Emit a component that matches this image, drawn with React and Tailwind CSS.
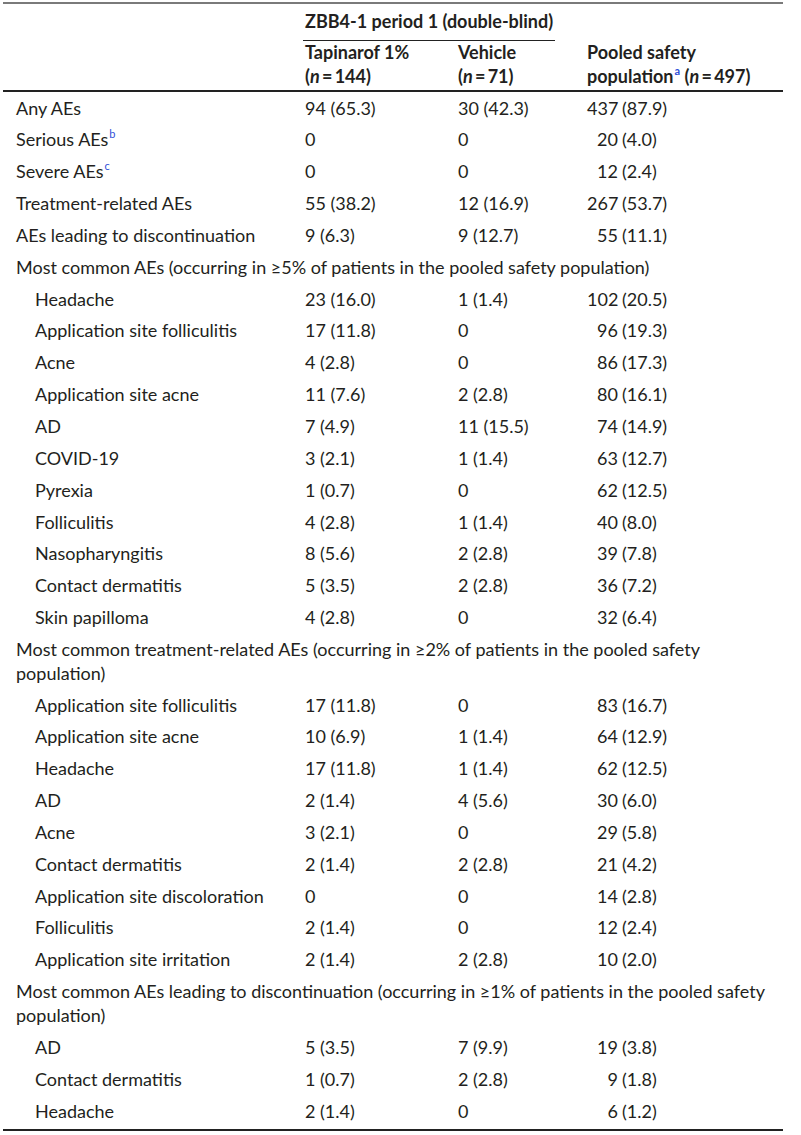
import React from "react";

// rows of the safety table
const rows = [
  { l: "Any AEs", v: ["94 (65.3)", "30 (42.3)", "437 (87.9)"] },
  { l: "Serious AEs", sup: "b", v: ["0", "0", "20 (4.0)"] },
  { l: "Severe AEs", sup: "c", v: ["0", "0", "12 (2.4)"] },
  { l: "Treatment-related AEs", v: ["55 (38.2)", "12 (16.9)", "267 (53.7)"] },
  { l: "AEs leading to discontinuation", v: ["9 (6.3)", "9 (12.7)", "55 (11.1)"] },
  { h: "Most common AEs (occurring in ≥5% of patients in the pooled safety population)" },
  { l: "Headache", i: true, v: ["23 (16.0)", "1 (1.4)", "102 (20.5)"] },
  { l: "Application site folliculitis", i: true, v: ["17 (11.8)", "0", "96 (19.3)"] },
  { l: "Acne", i: true, v: ["4 (2.8)", "0", "86 (17.3)"] },
  { l: "Application site acne", i: true, v: ["11 (7.6)", "2 (2.8)", "80 (16.1)"] },
  { l: "AD", i: true, v: ["7 (4.9)", "11 (15.5)", "74 (14.9)"] },
  { l: "COVID-19", i: true, v: ["3 (2.1)", "1 (1.4)", "63 (12.7)"] },
  { l: "Pyrexia", i: true, v: ["1 (0.7)", "0", "62 (12.5)"] },
  { l: "Folliculitis", i: true, v: ["4 (2.8)", "1 (1.4)", "40 (8.0)"] },
  { l: "Nasopharyngitis", i: true, v: ["8 (5.6)", "2 (2.8)", "39 (7.8)"] },
  { l: "Contact dermatitis", i: true, v: ["5 (3.5)", "2 (2.8)", "36 (7.2)"] },
  { l: "Skin papilloma", i: true, v: ["4 (2.8)", "0", "32 (6.4)"] },
  { h: "Most common treatment-related AEs (occurring in ≥2% of patients in the pooled safety population)" },
  { l: "Application site folliculitis", i: true, v: ["17 (11.8)", "0", "83 (16.7)"] },
  { l: "Application site acne", i: true, v: ["10 (6.9)", "1 (1.4)", "64 (12.9)"] },
  { l: "Headache", i: true, v: ["17 (11.8)", "1 (1.4)", "62 (12.5)"] },
  { l: "AD", i: true, v: ["2 (1.4)", "4 (5.6)", "30 (6.0)"] },
  { l: "Acne", i: true, v: ["3 (2.1)", "0", "29 (5.8)"] },
  { l: "Contact dermatitis", i: true, v: ["2 (1.4)", "2 (2.8)", "21 (4.2)"] },
  { l: "Application site discoloration", i: true, v: ["0", "0", "14 (2.8)"] },
  { l: "Folliculitis", i: true, v: ["2 (1.4)", "0", "12 (2.4)"] },
  { l: "Application site irritation", i: true, v: ["2 (1.4)", "2 (2.8)", "10 (2.0)"] },
  { h: "Most common AEs leading to discontinuation (occurring in ≥1% of patients in the pooled safety population)" },
  { l: "AD", i: true, v: ["5 (3.5)", "7 (9.9)", "19 (3.8)"] },
  { l: "Contact dermatitis", i: true, v: ["1 (0.7)", "2 (2.8)", "9 (1.8)"] },
  { l: "Headache", i: true, v: ["2 (1.4)", "0", "6 (1.2)"] },
];

const Sup = ({ c }) => (
  <sup className="text-[11px] text-[#2f4fd8] -top-[8px] ml-[1px]">{c}</sup>
);

// pooled column: numbers lined up on the bracket
const Pooled = ({ v }) => {
  const k = v.indexOf(" ");
  const a = k < 0 ? v : v.slice(0, k);
  const b = k < 0 ? "" : v.slice(k + 1);
  return (
    <span className="inline-flex whitespace-nowrap">
      <span className="w-[31px] text-right">{a}</span>
      <span className="ml-[4px]">{b}</span>
    </span>
  );
};

const N = ({ n }) => (
  <>
    (<i>n</i>{"\u2009=\u2009"}{n})
  </>
);

export default function App() {
  return (
    <div className="bg-white w-[801px] min-h-[1135px] pl-[3px] pt-[2px] text-[18px] text-[#231f20] font-['Lato','Liberation_Sans',sans-serif]">
      <div className="w-[780px] border-t-2 border-[#7a7a7a] border-b-2 border-b-[#222]">
        {/* header */}
        <div className="grid grid-cols-[302px_153px_129px_196px] leading-[23.85px] font-bold border-b-[2.5px] border-[#222]">
          <div className="row-span-2"></div>
          <div className="col-span-2 pt-[6px] pb-[6px] -ml-[2px] pl-[2px] mr-[32px] border-b border-[#222]">
            ZBB4-1 period 1 (double-blind)
          </div>
          <div></div>
          <div className="pb-[1px]">
            Tapinarof 1%
            <br />
            <N n="144" />
          </div>
          <div>
            Vehicle
            <br />
            <N n="71" />
          </div>
          <div>
            Pooled safety
            <br />
            population<Sup c="a" /> <N n="497" />
          </div>
        </div>
        {/* body */}
        <div className="leading-[23.85px] pb-[3px]">
          {rows.map((r, idx) =>
            r.h ? (
              <div key={idx} className="pl-[13px] pr-[4px] pt-[5px] pb-[3px]">
                {r.h}
              </div>
            ) : (
              <div key={idx} className="grid grid-cols-[302px_153px_129px_196px] pt-[5px] pb-[3px]">
                <div className={r.i ? "pl-[32px]" : "pl-[13px]"}>
                  {r.l}
                  {r.sup && <Sup c={r.sup} />}
                </div>
                <div>{r.v[0]}</div>
                <div>{r.v[1]}</div>
                <div>
                  <Pooled v={r.v[2]} />
                </div>
              </div>
            )
          )}
        </div>
      </div>
    </div>
  );
}
